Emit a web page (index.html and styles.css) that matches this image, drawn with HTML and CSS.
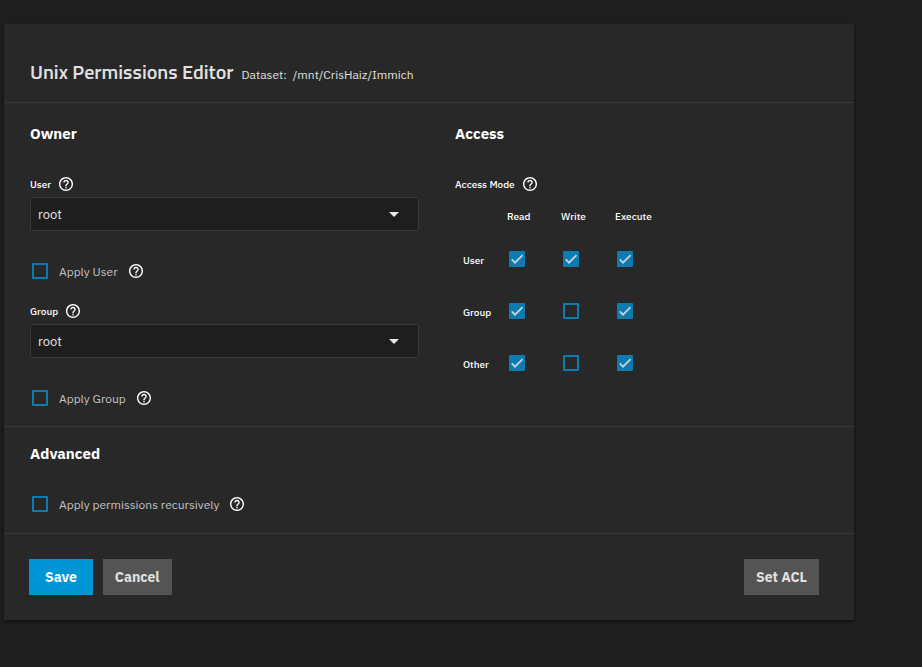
FILE: index.html
```html
<!DOCTYPE html>
<html lang="en">
<head>
<meta charset="utf-8">
<meta name="viewport" content="width=device-width, initial-scale=1">
<title>Unix Permissions Editor</title>
<link rel="stylesheet" href="styles.css">
</head>
<body>
<svg class="defs" aria-hidden="true">
  <symbol id="help" viewBox="2 2 20 20"><path d="M11 18h2v-2h-2v2zm1-16C6.480 2 2 6.480 2 12s4.480 10 10 10 10-4.480 10-10S17.520 2 12 2zm0 18c-4.410 0-8-3.590-8-8s3.590-8 8-8 8 3.590 8 8-3.590 8-8 8zm0-14c-2.210 0-4 1.790-4 4h2c0-1.100.900-2 2-2s2 .900 2 2c0 2-3 1.750-3 5h2c0-2.250 3-2.500 3-5 0-2.210-1.790-4-4-4z"/></symbol>
  <symbol id="arrow" viewBox="0 0 10 5"><path d="M0 0h10L5 5z"/></symbol>
  <symbol id="check" viewBox="0 0 24 24"><path d="M4.100 12.700 9 17.600 20.300 6.300" fill="none" stroke="#c9d3d8" stroke-width="2.600"/></symbol>
</svg>
<main class="card">
  <header class="head">
    <h1>Unix Permissions Editor</h1>
    <p class="dataset"><span>Dataset:</span><span>/mnt/CrisHaiz/Immich</span></p>
  </header>
  <form>
    <div class="columns">
      <section class="column">
        <h2>Owner</h2>
        <div class="label"><label for="user">User</label><svg class="help"><use href="#help"/></svg></div>
        <div class="select"><select id="user"><option>root</option></select><svg class="arrow"><use href="#arrow"/></svg></div>
        <div class="option">
          <span class="box"><input type="checkbox" id="apply-user"><svg><use href="#check"/></svg></span>
          <label for="apply-user">Apply User</label><svg class="help"><use href="#help"/></svg>
        </div>
        <div class="label"><label for="group">Group</label><svg class="help"><use href="#help"/></svg></div>
        <div class="select"><select id="group"><option>root</option></select><svg class="arrow"><use href="#arrow"/></svg></div>
        <div class="option last">
          <span class="box"><input type="checkbox" id="apply-group"><svg><use href="#check"/></svg></span>
          <label for="apply-group">Apply Group</label><svg class="help"><use href="#help"/></svg>
        </div>
      </section>
      <section class="column">
        <h2>Access</h2>
        <div class="label"><span>Access Mode</span><svg class="help"><use href="#help"/></svg></div>
        <table>
          <thead><tr><td></td><th scope="col">Read</th><th scope="col">Write</th><th scope="col">Execute</th></tr></thead>
          <tbody>
            <tr><th scope="row">User</th>
              <td><span class="box"><input type="checkbox" aria-label="User read" checked><svg><use href="#check"/></svg></span></td>
              <td><span class="box"><input type="checkbox" aria-label="User write" checked><svg><use href="#check"/></svg></span></td>
              <td><span class="box"><input type="checkbox" aria-label="User execute" checked><svg><use href="#check"/></svg></span></td></tr>
            <tr><th scope="row">Group</th>
              <td><span class="box"><input type="checkbox" aria-label="Group read" checked><svg><use href="#check"/></svg></span></td>
              <td><span class="box"><input type="checkbox" aria-label="Group write"><svg><use href="#check"/></svg></span></td>
              <td><span class="box"><input type="checkbox" aria-label="Group execute" checked><svg><use href="#check"/></svg></span></td></tr>
            <tr><th scope="row">Other</th>
              <td><span class="box"><input type="checkbox" aria-label="Other read" checked><svg><use href="#check"/></svg></span></td>
              <td><span class="box"><input type="checkbox" aria-label="Other write"><svg><use href="#check"/></svg></span></td>
              <td><span class="box"><input type="checkbox" aria-label="Other execute" checked><svg><use href="#check"/></svg></span></td></tr>
          </tbody>
        </table>
      </section>
    </div>
    <section class="advanced">
      <h2>Advanced</h2>
      <div class="option last">
        <span class="box"><input type="checkbox" id="recursive"><svg><use href="#check"/></svg></span>
        <label for="recursive">Apply permissions recursively</label><svg class="help"><use href="#help"/></svg>
      </div>
    </section>
    <div class="actions">
      <button type="submit" class="primary">Save</button>
      <button type="button">Cancel</button>
      <button type="button" class="acl">Set ACL</button>
    </div>
  </form>
</main>
</body>
</html>
```

FILE: styles.css
```css
* { box-sizing: border-box; }

body {
  margin: 0;
  padding: 24px 68px 24px 4px;
  background: #1e1e1e;
  color: #fff;
  font-family: "IBM Plex Sans", Roboto, sans-serif;
  font-size: 12px;
}

h1, h2, p { margin: 0; }
svg { display: block; fill: #fff; }
.defs { position: absolute; width: 0; height: 0; }

.card {
  background: #282828;
  box-shadow: 0 2px 2px rgba(0, 0, 0, 0.25), 0 1px 4px rgba(0, 0, 0, 0.2);
}

.head {
  display: flex;
  align-items: baseline;
  gap: 8px;
  padding: 33px 26px 15px;
  border-bottom: 1px solid #383838;
}

h1 {
  color: #e0e0e0;
  font-family: "Titillium Web", Roboto, sans-serif;
  font-size: 20px;
  font-weight: 600;
  line-height: 30px;
}

.dataset {
  display: flex;
  gap: 6px;
  color: #e0e0e0;
}

h2 {
  margin-bottom: 29px;
  font-size: 15px;
  font-weight: 700;
  line-height: 22px;
}

.columns {
  display: grid;
  grid-template-columns: 1fr 1fr;
  border-bottom: 1px solid #383838;
}

.column { padding: 20px 10px 18px 26px; }

.label {
  display: flex;
  align-items: center;
  gap: 8px;
  height: 20px;
  margin-bottom: 3px;
  font-size: 10px;
  font-weight: 500;
}

.help { width: 14px; height: 14px; }

.select { position: relative; }

.select select {
  display: block;
  width: 100%;
  height: 34px;
  padding: 0 7px;
  appearance: none;
  border: 1px solid #383838;
  border-radius: 2px;
  background: #1e1e1e;
  color: #e8e8e8;
  font: inherit;
  font-size: 13px;
}

.arrow {
  position: absolute;
  top: 15px;
  right: 20px;
  width: 10px;
  height: 5px;
  fill: #e8e8e8;
  pointer-events: none;
}

.option {
  display: flex;
  align-items: center;
  height: 20px;
  margin: 30px 0 20px;
  padding-left: 2px;
  color: #c4c4c4;
}

.option.last { margin-bottom: 0; }
.option label { margin: 0 11px; }

.box {
  display: block;
  position: relative;
  width: 16px;
  height: 16px;
}

.box input {
  display: block;
  width: 16px;
  height: 16px;
  margin: 0;
  appearance: none;
  border: 2px solid #0c7bb0;
  border-radius: 1px;
}

.box svg {
  position: absolute;
  inset: 0;
  width: 16px;
  height: 16px;
  visibility: hidden;
  pointer-events: none;
}

.box input:checked { background: #0c7bb0; }
.box input:checked + svg { visibility: visible; }

table {
  border-collapse: collapse;
  font-size: 10px;
}

tr { height: 52px; }
thead tr { height: 36px; }
th, td { width: 54px; padding: 0; }
th { padding-top: 2px; font-weight: 500; text-align: left; }
tbody th, thead td { width: 52px; padding-left: 8px; }
tbody td { padding-left: 2px; }

.advanced {
  padding: 16px 26px 19px;
  border-bottom: 1px solid #383838;
}

.advanced .option { margin-top: 0; }

.actions {
  display: flex;
  gap: 10px;
  padding: 25px 35px 25px 25px;
}

button {
  height: 36px;
  padding: 0 12px;
  border: 0;
  background: #545454;
  color: #e0e0e0;
  font: inherit;
  font-size: 14px;
  font-weight: 700;
}

.primary {
  padding: 0 16px;
  background: #0095d5;
  color: #fff;
}

.acl { margin-left: auto; }
```
